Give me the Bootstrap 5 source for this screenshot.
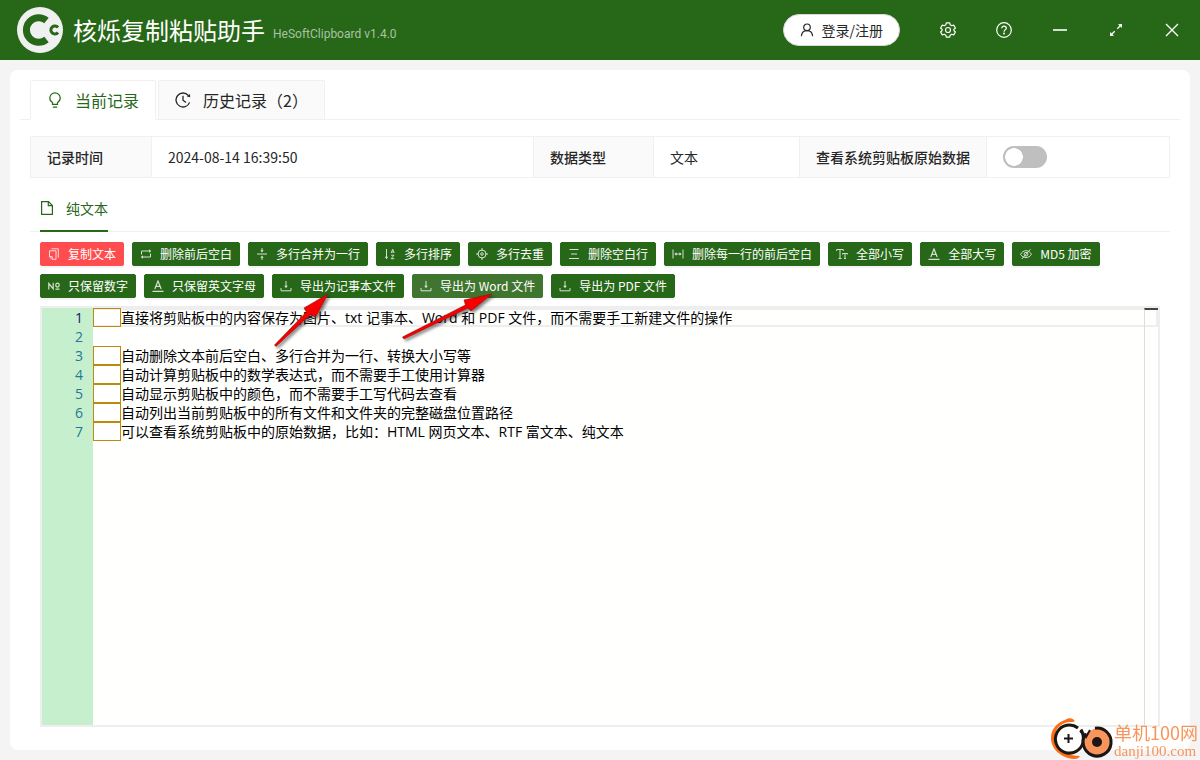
<!DOCTYPE html>
<html lang="zh-CN">
<head>
<meta charset="utf-8">
<meta name="viewport" content="width=device-width, initial-scale=1">
<title>核烁复制粘贴助手</title>
<link href="https://cdn.jsdelivr.net/npm/bootstrap@5.3.0/dist/css/bootstrap.min.css" rel="stylesheet">
<style>
:root{--brand:#276718;--line:#f0f0f0;--ink:#262626}
body{font-family:"Noto Sans CJK SC",sans-serif;font-size:14px;line-height:22px;color:var(--ink);background:#f4f4f4}
svg{display:block;fill:none;stroke:currentColor;flex:none}
.topbar{height:60px;background:var(--brand);color:#fff}
.app-title{font-size:24px;line-height:36px;font-weight:400;margin:0 8px 0 9px}
.app-version{font-family:Roboto,sans-serif;font-size:12px;line-height:18px;color:#a8c3a2}
.login-btn{height:32px;border:1px solid #d9d9d9;border-radius:16px;background:#fff;color:var(--ink);padding:0 16px;gap:8px;margin-right:20px}
.win-btn{width:56px;height:60px;border:0;background:none;color:#fff}
.panel{background:#fff;border-radius:8px;margin:10px;padding:10px}
.main-tabs{border-bottom:1px solid var(--line);padding:0 10px;gap:2px}
.main-tabs .nav-link{height:40px;margin-bottom:-1px;border:1px solid var(--line);border-radius:2px 2px 0 0;background:#fafafa;color:var(--ink);font-size:16px;line-height:24px;padding:0 16px;gap:12px}
.main-tabs .nav-link.active{background:#fff;color:var(--brand);border-bottom-color:#fff}
.inner{padding:16px 10px 0}
.info-table{table-layout:fixed;border:1px solid var(--line)}
.info-table th,.info-table td{height:41px;padding:0 15px 0 16px;border:1px solid var(--line);vertical-align:middle;line-height:20px}
.info-table th{background:#fafafa;font-weight:500;white-space:nowrap}
.toggle{height:22px;min-height:0;margin:0;padding:0}
.toggle .form-check-input{width:44px;height:22px;margin:0;border:0;float:none;display:block;background:#bfbfbf radial-gradient(circle 9px at 11px 11px,#fff 95%,transparent 100%);border-radius:11px}
.toggle .form-check-input:checked{background:var(--brand) radial-gradient(circle 9px at 33px 11px,#fff 95%,transparent 100%)}
.sub-tabs{height:54px;border-bottom:1px solid var(--line);padding:0 10px}
.sub-tabs .nav-link{height:54px;padding:8px 0 0;gap:12px;color:var(--brand);border-radius:0;border-bottom:2px solid var(--brand)}
.work{padding:10px 10px 0}
.tool{height:24px;padding:0 7px;gap:8px;font-size:12px;line-height:18px;color:#fff;background:var(--brand);border:1px solid var(--brand);border-radius:2px;box-shadow:0 2px 0 rgba(0,0,0,.04)}
.tool svg{opacity:.8}
.tool:hover{color:#fff;background:#3f752f;border-color:#3f752f}
.tool.hot{background:#3f752f;border-color:#3f752f}
.tool.red{background:#ff4d4f;border-color:#ff4d4f}
.editor{margin-top:8px;margin-bottom:13px;border:2px solid #eee;background:#fffffe;line-height:19px;font-family:"Open Sans","Noto Sans CJK SC",sans-serif}
.gutter{width:51px;background:#c6efce;color:#237893;text-align:right;padding-right:10px}
.gutter .now{color:#0b216f}
.code-text{border:0;outline:0;resize:none;background:none;color:#000;padding:0;line-height:19px;white-space:pre;overflow:hidden;display:block}
.line-now{top:0;left:0;right:0;height:19px;border:2px solid #eee;border-left:0}
.blank-marks{top:0;left:0}
.blank-marks span{display:block;width:28px;height:19px}
.blank-marks .on{border:1px solid #bd8a0c}
.overview{top:0;right:0;bottom:0;width:14px;border-left:1px solid #ddd;border-top:2px solid #444}
.arrows{left:225px;top:48px;stroke:none;pointer-events:none;z-index:2}
.site-mark{right:2px;bottom:0;color:#f9945a}
.site-mark .zh{font-size:18px;line-height:20px}
.site-mark .en{font-family:"Liberation Serif",serif;font-size:15px;line-height:18px}
</style>
</head>
<body class="d-flex flex-column min-vh-100">
<header class="topbar d-flex align-items-center">
  <svg class="ms-3" width="48" height="48" viewBox="0 0 48 48">
    <circle cx="24" cy="24" r="23" fill="#f0f0f0" stroke="none"/>
    <path d="M30.500 14.500A12.300 12.300 0 1 0 30.500 33.500" stroke="#276718" stroke-width="7"/>
    <path d="M42 21.500A4 4 0 1 0 42 26.500" stroke="#276718" stroke-width="3"/>
  </svg>
  <h1 class="app-title">核烁复制粘贴助手</h1>
  <span class="app-version mt-2">HeSoftClipboard v1.4.0</span>
  <button class="login-btn d-flex align-items-center ms-auto" type="button">
    <svg width="14" height="14" viewBox="0 0 14 14" stroke-width="1.200"><circle cx="7" cy="4.300" r="3.300"/><path d="M1.400 13.300C1.600 9.900 3.900 7.700 7 7.700S12.400 9.900 12.600 13.300"/></svg>登录/注册</button>
  <button class="win-btn d-flex align-items-center justify-content-center" type="button" aria-label="设置">
    <svg width="16" height="16" viewBox="0 0 16 16" stroke-width="1.200" stroke-linejoin="round"><path d="M6.300.800H9.700L10.200 2.800L11.700 3.700L13.700 3.100L15.400 6L13.900 7.400V8.600L15.400 10L13.700 12.900L11.700 12.300L10.200 13.200L9.700 15.200H6.300L5.800 13.200L4.300 12.300L2.300 12.900L.600 10L2.100 8.600V7.400L.600 6L2.300 3.100L4.300 3.700L5.800 2.800Z"/><circle cx="8" cy="8" r="2.500"/></svg></button>
  <button class="win-btn d-flex align-items-center justify-content-center" type="button" aria-label="帮助">
    <svg width="16" height="16" viewBox="0 0 16 16" stroke-width="1.200"><circle cx="8" cy="8" r="7.300"/><path d="M5.700 6.300C5.700 3.300 10.300 3.400 10.300 6.200C10.300 7.800 8 7.900 8 9.700"/><circle cx="8" cy="11.600" r=".400"/></svg></button>
  <button class="win-btn d-flex align-items-center justify-content-center" type="button" aria-label="最小化">
    <svg width="16" height="16" viewBox="0 0 16 16" stroke-width="1.600"><path d="M1 8H15"/></svg></button>
  <button class="win-btn d-flex align-items-center justify-content-center" type="button" aria-label="最大化">
    <svg width="16" height="16" viewBox="0 0 16 16" stroke-width="1.300"><path d="M9.300 6.700L13 3M6.700 9.300L3 13"/><path d="M10 2.200L14 2L13.800 6ZM2 14L2.200 10L6 13.800Z" fill="currentColor" stroke="none"/></svg></button>
  <button class="win-btn d-flex align-items-center justify-content-center" type="button" aria-label="关闭">
    <svg width="16" height="16" viewBox="0 0 16 16" stroke-width="1.400"><path d="M2 2L14 14M14 2L2 14"/></svg></button>
</header>

<main class="panel flex-grow-1 d-flex flex-column">
  <nav class="nav main-tabs">
    <a href="#current" class="nav-link active d-flex align-items-center"><svg width="16" height="16" viewBox="0 0 16 16" stroke-width="1.200"><path d="M5.500 12.300V10.500C3.700 9.500 2.800 7.900 2.800 6A5.200 5.200 0 0 1 13.200 6C13.200 7.900 12.300 9.500 10.500 10.500V12.300ZM5.800 15.200H10.200"/></svg>当前记录</a>
    <a href="#history" class="nav-link d-flex align-items-center"><svg width="16" height="16" viewBox="0 0 16 16" stroke-width="1.300"><path d="M13.400 3.500A7 7 0 1 0 14.600 10.400M8 3.800V8.300L11 10.600"/><path d="M11.800 4.600L15.200 5.300L15 1.900Z" fill="currentColor" stroke="none"/></svg>历史记录（2）</a>
  </nav>
  <div class="inner flex-grow-1 d-flex flex-column" id="current">
    <table class="info-table w-100">
      <colgroup><col style="width:121px"><col><col style="width:120px"><col style="width:146px"><col style="width:187px"><col style="width:183px"></colgroup>
      <tbody><tr>
        <th scope="row">记录时间</th><td>2024-08-14 16:39:50</td>
        <th scope="row">数据类型</th><td>文本</td>
        <th scope="row"><label for="raw">查看系统剪贴板原始数据</label></th>
        <td><div class="form-check form-switch toggle"><input class="form-check-input" type="checkbox" role="switch" id="raw"></div></td>
      </tr></tbody>
    </table>
    <nav class="nav sub-tabs">
      <a href="#plain" class="nav-link d-flex align-items-center"><svg width="14" height="14" viewBox="0 0 14 14" stroke-width="1.200"><path d="M1.600.600H8.500L12.400 4.500V13.400H1.600ZM8.300.800V4.700H12.200"/></svg>纯文本</a>
    </nav>
    <div class="work flex-grow-1 d-flex flex-column position-relative" id="plain">
      <div class="d-flex flex-wrap gap-2">
        <button type="button" class="tool red d-flex align-items-center"><svg width="12" height="12" viewBox="0 0 12 12"><path d="M3.500.800H10.300V9.800M1.500 2.800H8V11.300H4L1.500 8.800ZM4.200 11V8.600H1.800"/></svg>复制文本</button>
        <button type="button" class="tool d-flex align-items-center"><svg width="12" height="12" viewBox="0 0 12 12"><path d="M1.500 6.500V3H9.500M10.500 5.500V9H2.500"/><path d="M9 1.200V4.800L11.300 3ZM3 7.200V10.800L.700 9Z" fill="currentColor" stroke="none"/></svg>删除前后空白</button>
        <button type="button" class="tool d-flex align-items-center"><svg width="12" height="12" viewBox="0 0 12 12"><path d="M1 6H11M6 0V3M6 12V9"/><path d="M4.300 2.300H7.700L6 4.500ZM4.300 9.700H7.700L6 7.500Z" fill="currentColor" stroke="none"/></svg>多行合并为一行</button>
        <button type="button" class="tool d-flex align-items-center"><svg width="12" height="12" viewBox="0 0 12 12"><path d="M2.500 1V10M7.200 5L8.700 1.300L10.200 5M7.700 4H9.700M7.200 7.200H10L7.200 10.700H10.300"/><path d="M.800 8.700H4.200L2.500 11.200Z" fill="currentColor" stroke="none"/></svg>多行排序</button>
        <button type="button" class="tool d-flex align-items-center"><svg width="12" height="12" viewBox="0 0 12 12"><circle cx="6" cy="6" r="4"/><circle cx="6" cy="6" r="1.300"/><path d="M6 0V3M6 9V12M0 6H3M9 6H12"/></svg>多行去重</button>
        <button type="button" class="tool d-flex align-items-center"><svg width="12" height="12" viewBox="0 0 12 12"><path d="M1.500 1.500H10.500M3 6H9M1 10.500H11"/></svg>删除空白行</button>
        <button type="button" class="tool d-flex align-items-center"><svg width="12" height="12" viewBox="0 0 12 12"><path d="M1 1.500V10.500M11 1.500V10.500M3 6H9"/><path d="M4.500 4.300V7.700L2.300 6ZM7.500 4.300V7.700L9.700 6Z" fill="currentColor" stroke="none"/></svg>删除每一行的前后空白</button>
        <button type="button" class="tool d-flex align-items-center"><svg width="12" height="12" viewBox="0 0 12 12"><path d="M.700 3V1.500H7.300V3M4 1.500V10.500M2.500 10.500H5.500M6.500 6.500V5.500H11.500V6.500M9 5.500V10.500M8 10.500H10"/></svg>全部小写</button>
        <button type="button" class="tool d-flex align-items-center"><svg width="12" height="12" viewBox="0 0 12 12" stroke-width="1.200"><path d="M2.800 9L6 1L9.200 9M4 6.300H8M.500 11.300H11.500"/></svg>全部大写</button>
        <button type="button" class="tool d-flex align-items-center"><svg width="12" height="12" viewBox="0 0 12 12"><path d="M.600 6.300C3 1.500 9 1.500 11.400 6.300C9 10.700 3 10.700 .600 6.300ZM1.800 11L10.500 1.200"/><circle cx="6" cy="6.200" r="1.900"/></svg>MD5 加密</button>
        <button type="button" class="tool d-flex align-items-center"><svg width="12" height="12" viewBox="0 0 12 12" stroke-width="1.200"><path d="M.800 9.500V3.500L5.200 8.800V2.700M7.500 9.200H11.500"/><ellipse cx="9.500" cy="5.100" rx="1.700" ry="2"/></svg>只保留数字</button>
        <button type="button" class="tool d-flex align-items-center"><svg width="12" height="12" viewBox="0 0 12 12" stroke-width="1.200"><path d="M2.800 9L6 1L9.200 9M4 6.300H8M.500 11.300H11.500"/></svg>只保留英文字母</button>
        <button type="button" class="tool d-flex align-items-center"><svg width="12" height="12" viewBox="0 0 12 12"><path d="M1 8V10.800H11V8M6 1V7"/><path d="M4.200 5.800H7.800L6 8.300Z" fill="currentColor" stroke="none"/></svg>导出为记事本文件</button>
        <button type="button" class="tool hot d-flex align-items-center"><svg width="12" height="12" viewBox="0 0 12 12"><path d="M1 8V10.800H11V8M6 1V7"/><path d="M4.200 5.800H7.800L6 8.300Z" fill="currentColor" stroke="none"/></svg>导出为 Word 文件</button>
        <button type="button" class="tool d-flex align-items-center"><svg width="12" height="12" viewBox="0 0 12 12"><path d="M1 8V10.800H11V8M6 1V7"/><path d="M4.200 5.800H7.800L6 8.300Z" fill="currentColor" stroke="none"/></svg>导出为 PDF 文件</button>
      </div>
      <svg class="arrows position-absolute" width="250" height="76" viewBox="0 0 250 76">
        <defs><filter id="soft" x="-10%" y="-10%" width="130%" height="130%"><feDropShadow dx="2" dy="2" stdDeviation="1.500" flood-opacity=".5"/></filter></defs>
        <g fill="#f80000" stroke="#7d1512" stroke-width=".600" filter="url(#soft)">
          <path d="M19.500 65L51.500 32L49 28L73 14L60.500 37L55.500 34.500L21 66.500Z"/>
          <path d="M147.500 57L210.500 25L209 20L237 14L216 31L213 28L149 59Z"/>
        </g>
      </svg>
      <div class="editor flex-grow-1 d-flex">
        <div class="gutter"><div class="now">1</div><div>2</div><div>3</div><div>4</div><div>5</div><div>6</div><div>7</div></div>
        <div class="flex-grow-1 position-relative">
          <div class="line-now position-absolute"></div>
          <div class="blank-marks position-absolute"><span class="on"></span><span></span><span class="on"></span><span class="on"></span><span class="on"></span><span class="on"></span><span class="on"></span></div>
          <textarea class="code-text position-relative w-100 h-100" aria-label="纯文本内容" spellcheck="false">　　直接将剪贴板中的内容保存为图片、txt 记事本、Word 和 PDF 文件，而不需要手工新建文件的操作

　　自动删除文本前后空白、多行合并为一行、转换大小写等
　　自动计算剪贴板中的数学表达式，而不需要手工使用计算器
　　自动显示剪贴板中的颜色，而不需要手工写代码去查看
　　自动列出当前剪贴板中的所有文件和文件夹的完整磁盘位置路径
　　可以查看系统剪贴板中的原始数据，比如：HTML 网页文本、RTF 富文本、纯文本</textarea>
          <div class="overview position-absolute"></div>
        </div>
      </div>
    </div>
  </div>
</main>

<div class="site-mark position-fixed d-flex align-items-end">
  <svg width="65" height="43" viewBox="0 0 65 43">
    <path d="M26 4C24 1 20 0 16 3C7 6 2 13 2 21C2 32 12 41 25 42C28 42 30 41 31 39C20 39 8 34 6 23C5 15 9 8 16 6C20 4 23 6 26 4Z" fill="#fb6e14" stroke="none"/>
    <path d="M29 11A14 14 0 1 0 34 25.500C35 20 34 16 32 12.500" stroke="#1c1614" stroke-width="3" fill="#fff"/>
    <path d="M15 21.500H24M19.500 17V26" stroke="#1c1614" stroke-width="2"/>
    <path d="M46 11.200A14 14 0 1 1 37 16.500" stroke="#1c1614" stroke-width="3" fill="#f9945a"/>
    <path d="M31 14L37 20L41 13" stroke="#1c1614" stroke-width="2"/>
    <circle cx="48" cy="25" r="5" fill="#1c1614" stroke="none"/>
  </svg>
  <div><div class="zh">单机100网</div><div class="en">danji100.com</div></div>
</div>
<script src="https://cdn.jsdelivr.net/npm/bootstrap@5.3.0/dist/js/bootstrap.bundle.min.js"></script>
</body>
</html>
